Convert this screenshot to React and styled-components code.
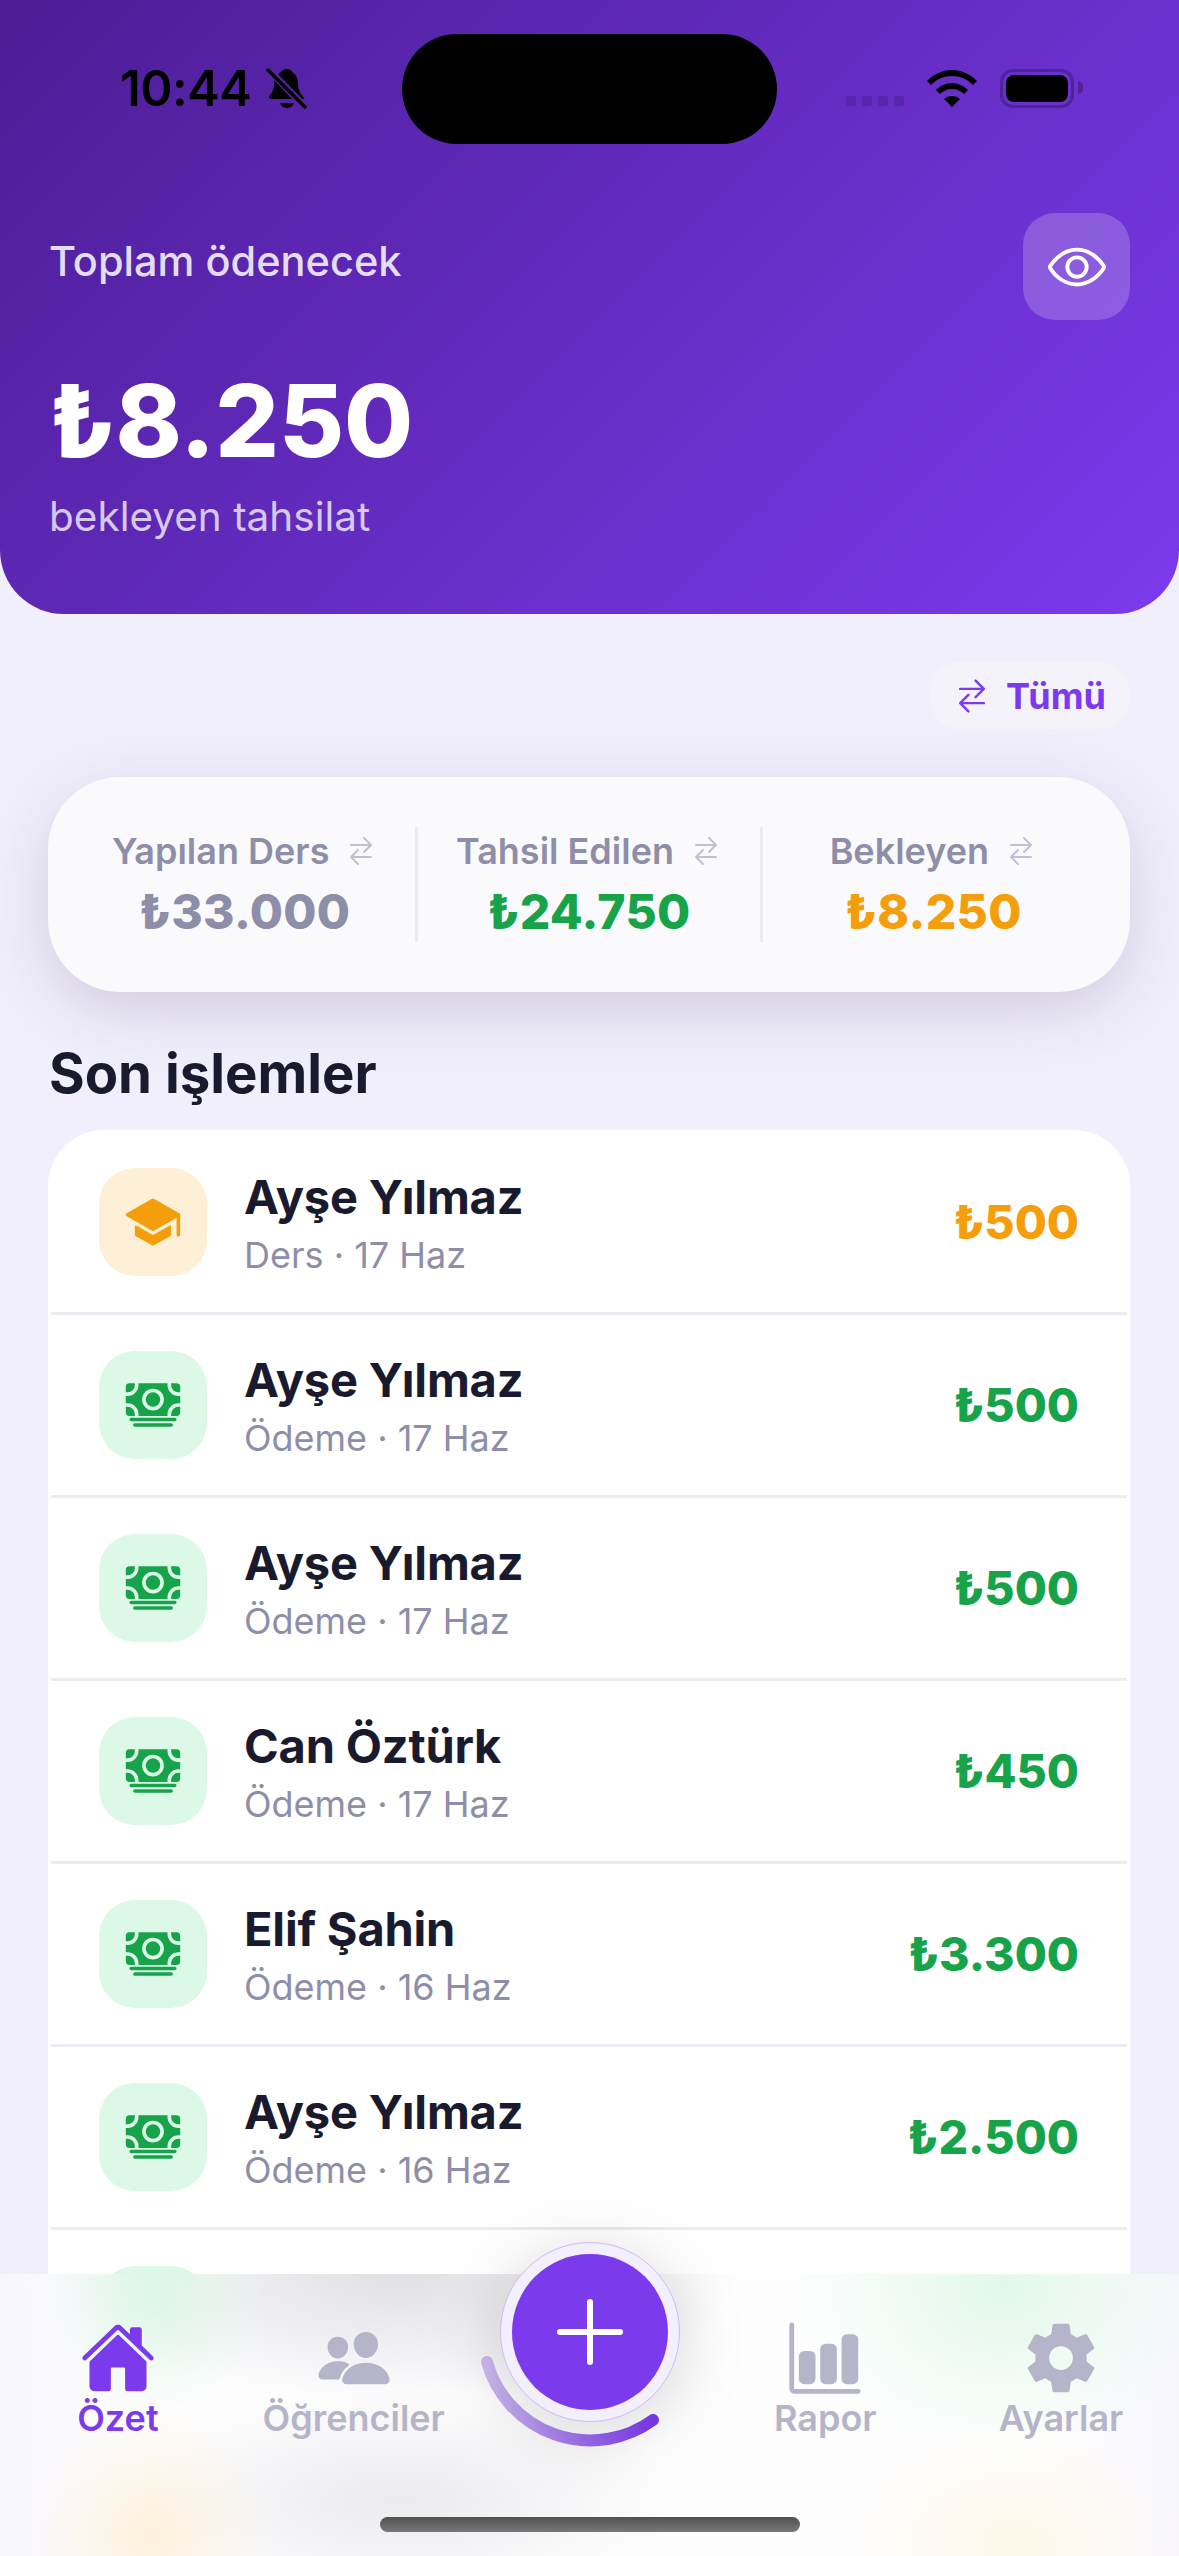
import React from "react";
import styled, { createGlobalStyle } from "styled-components";
import {
  IoBarChart,
  IoCash,
  IoEyeOutline,
  IoHome,
  IoPeople,
  IoSchool,
  IoSettingsSharp,
  IoSwapHorizontal
} from "react-icons/io5";

const GlobalStyle = createGlobalStyle`
  html, body {
    margin: 0;
    padding: 0;
    background: #f2effc;
  }
  body {
    font-family: Inter, "Noto Sans", sans-serif;
  }
`;

const Screen = styled.div`
  position: relative;
  width: 1179px;
  height: 2556px;
  overflow: hidden;
  background: #f2effc;
`;

const Header = styled.header`
  box-sizing: border-box;
  height: 614px;
  padding: 0 49px;
  border-radius: 0 0 64px 64px;
  background: linear-gradient(135deg, #4c1d95, #7c3aed);
  color: #fff;
`;

const StatusBar = styled.div`
  display: flex;
  align-items: center;
  justify-content: space-between;
  height: 176px;
  padding: 0 0 0 71px;
  box-sizing: border-box;
`;

const Clock = styled.div`
  display: flex;
  align-items: center;
  gap: 15px;
  font-size: 49px;
  font-weight: 600;
  letter-spacing: -0.5px;
  color: #000;
`;

const StatusIcons = styled.div`
  display: flex;
  align-items: center;
  gap: 23px;
  margin-right: 56px;
`;

const SignalDots = styled.div`
  display: flex;
  gap: 6px;
  margin-top: 26px;
`;

const SignalDot = styled.span`
  width: 10px;
  height: 10px;
  border-radius: 3px;
  background: #5527a8;
`;

const Battery = styled.div`
  position: relative;
  box-sizing: border-box;
  width: 74px;
  height: 39px;
  padding: 3px;
  border: 3px solid #4c2597;
  border-radius: 13px;
  &::before {
    content: "";
    display: block;
    height: 100%;
    border-radius: 8px;
    background: #000;
  }
  &::after {
    content: "";
    position: absolute;
    right: -12px;
    top: 9px;
    width: 5px;
    height: 13px;
    border-radius: 0 6px 6px 0;
    background: #4c2597;
  }
`;

const Island = styled.div`
  position: absolute;
  top: 34px;
  left: 402px;
  width: 375px;
  height: 110px;
  border-radius: 55px;
  background: #000;
`;

const TotalRow = styled.div`
  display: flex;
  justify-content: space-between;
  align-items: flex-start;
  margin-top: 37px;
`;

const TotalLabel = styled.div`
  margin-top: 24px;
  font-size: 41.5px;
  line-height: 48px;
  font-weight: 500;
  color: rgba(255, 255, 255, 0.85);
`;

const EyeButton = styled.div`
  display: flex;
  align-items: center;
  justify-content: center;
  width: 107px;
  height: 107px;
  border-radius: 32px;
  background: rgba(255, 255, 255, 0.2);
  font-size: 62px;
`;

const TotalAmount = styled.div`
  margin-top: 41px;
  font-size: 100px;
  line-height: 120px;
  font-weight: 800;
`;

const TotalHint = styled.div`
  margin-top: 13px;
  font-size: 40.5px;
  line-height: 46px;
  color: rgba(255, 255, 255, 0.75);
`;

const FilterRow = styled.div`
  display: flex;
  justify-content: flex-end;
  padding: 48px 49px 0;
`;

const FilterPill = styled.div`
  display: flex;
  align-items: center;
  gap: 15px;
  height: 67px;
  padding: 0 24px;
  border-radius: 32px;
  background: #f4f2fb;
  color: #7c3aed;
  font-size: 36px;
  font-weight: 700;
  svg {
    font-size: 38px;
  }
`;

const StatsCard = styled.section`
  display: flex;
  box-sizing: border-box;
  height: 215px;
  margin: 48px 49px 0 48px;
  padding: 50px 26px;
  border-radius: 72px;
  background: #fafafc;
  box-shadow: 0 18px 64px rgba(40, 30, 90, 0.17);
`;

const StatCol = styled.div`
  flex: 1 0 0;
  display: flex;
  flex-direction: column;
  align-items: center;
  & + & {
    border-left: 3px solid #ebeaf1;
  }
`;

const StatLabel = styled.div`
  display: flex;
  align-items: center;
  gap: 16px;
  font-size: 36px;
  line-height: 48px;
  font-weight: 600;
  color: #8e8ea9;
  white-space: nowrap;
  svg {
    font-size: 32px;
    color: #c0c0d0;
  }
`;

const StatValue = styled.div`
  margin-top: 9px;
  font-size: 48px;
  line-height: 56px;
  font-weight: 800;
  letter-spacing: 0.3px;
  color: ${(p) => p.$color};
`;

const SectionTitle = styled.h2`
  margin: 49px 49px 0;
  font-size: 54.5px;
  line-height: 64px;
  font-weight: 700;
  color: #1a1a2e;
`;

const TxList = styled.section`
  margin: 25px 49px 0 48px;
  padding-top: 2px;
  border-radius: 56px 56px 0 0;
  background: #fff;
`;

const TxRow = styled.div`
  display: flex;
  align-items: center;
  box-sizing: border-box;
  height: 183px;
  margin: 0 3px;
  padding: 0 48px;
  border-bottom: 3px solid #ecebf4;
`;

const TxIcon = styled.div`
  flex: none;
  display: flex;
  align-items: center;
  justify-content: center;
  width: 108px;
  height: 108px;
  border-radius: 36px;
  background: ${(p) => p.$bg};
  color: ${(p) => p.$color};
  font-size: 58px;
`;

const TxText = styled.div`
  flex: 1;
  margin-left: 37px;
  padding-top: 1px;
`;

const TxName = styled.div`
  font-size: 47px;
  line-height: 56px;
  font-weight: 650;
  letter-spacing: -0.2px;
  color: #1a1a2e;
`;

const TxSub = styled.div`
  margin-top: 8px;
  font-size: 36px;
  line-height: 44px;
  color: #8e8ea9;
`;

const TxAmount = styled.div`
  font-size: 46.5px;
  font-weight: 800;
  color: ${(p) => p.$color};
`;

// the frosted bar: what would show through the blur is painted as soft glows
const TabBar = styled.nav`
  position: absolute;
  left: 0;
  right: 0;
  bottom: 0;
  display: flex;
  box-sizing: border-box;
  height: 282px;
  padding-top: 46px;
  background:
    radial-gradient(110px 125px at 154px 16px, #ddf7e7, rgba(221, 247, 231, 0)),
    radial-gradient(210px 170px at 1003px 12px, #e2f8ea, rgba(226, 248, 234, 0)),
    radial-gradient(120px 130px at 150px 262px, #fdf1dc, rgba(253, 241, 220, 0)),
    radial-gradient(170px 120px at 1015px 270px, #fdf7e8, rgba(253, 247, 232, 0)),
    radial-gradient(340px 130px at 400px 0px, #e0e0e5, rgba(224, 224, 229, 0)),
    radial-gradient(280px 110px at 400px 226px, #ebebee, rgba(235, 235, 238, 0)),
    linear-gradient(90deg, #f8f6fd, #fdfdfe 12%, #fefefe 88%, #f8f6fd);
`;

const Tab = styled.div`
  flex: 1;
  display: flex;
  flex-direction: column;
  align-items: center;
  height: 120px;
  color: ${(p) => (p.$active ? "#7c3aed" : "#b5b4c8")};
`;

const TabIcon = styled.div`
  display: flex;
  align-items: center;
  justify-content: center;
  height: 76px;
  font-size: 76px;
`;

const TabLabel = styled.div`
  font-size: 36px;
  line-height: 44px;
  font-weight: 600;
`;

const Fab = styled.div`
  position: absolute;
  left: 500px;
  top: 2242px;
  box-sizing: border-box;
  width: 180px;
  height: 180px;
  padding: 11px;
  border: 1px solid #cdbcf6;
  border-radius: 50%;
  background: #f3effd;
  box-shadow: 0 10px 70px rgba(0, 0, 0, 0.16);
`;

const FabInner = styled.div`
  display: flex;
  align-items: center;
  justify-content: center;
  height: 100%;
  border-radius: 50%;
  background: #7c3aed;
`;

const FabArc = styled.svg`
  position: absolute;
  left: 470px;
  top: 2212px;
`;

const HomeIndicator = styled.div`
  position: absolute;
  left: 380px;
  top: 2517px;
  width: 420px;
  height: 15px;
  border-radius: 8px;
  background: linear-gradient(#505050, #787878);
`;

const BellSlash = () => (
  <svg width="42" height="42" viewBox="0 0 42 42">
    <path
      d="M21 2c3 0 5 2 6 4 4 2 5 7 5 11 0 4 1 7 3 10 2 2 3 4 3 5H6c-2 0-3-1-3-2 0-2 3-3 4-7 1-2 1-4 1-6 0-5 2-9 6-11 1-2 4-4 7-4z"
      fill="#000"
    />
    <path d="M14 36c1 3 4 5 7 5s6-2 7-5z" fill="#000" />
    <path d="M3 3l36 37" stroke="#5323a5" strokeWidth="7" />
    <path d="M2 3l37 37" stroke="#000" strokeWidth="3.4" strokeLinecap="round" />
  </svg>
);

const Wifi = () => (
  <svg width="50" height="37" viewBox="0 0 50 37">
    <path
      d="M0 11C7 4 15 0 25 0s18 4 25 11l-4 4C40 9 33 6 25 6S10 9 4 15z"
      fill="#000"
    />
    <path
      d="M9 20c4-4 10-7 16-7s12 3 16 7l-4 4c-3-3-7-5-12-5s-9 2-12 5z"
      fill="#000"
    />
    <path d="M17 29c2-2 5-3 8-3s6 1 8 3l-8 8z" fill="#000" />
  </svg>
);

const stats = [
  { label: "Yapılan Ders", value: "₺33.000", color: "#8e8ea9" },
  { label: "Tahsil Edilen", value: "₺24.750", color: "#16a34a" },
  { label: "Bekleyen", value: "₺8.250", color: "#f59e0b" }
];

const txs = [
  { name: "Ayşe Yılmaz", sub: "Ders · 17 Haz", amount: "₺500", lesson: true },
  { name: "Ayşe Yılmaz", sub: "Ödeme · 17 Haz", amount: "₺500" },
  { name: "Ayşe Yılmaz", sub: "Ödeme · 17 Haz", amount: "₺500" },
  { name: "Can Öztürk", sub: "Ödeme · 17 Haz", amount: "₺450" },
  { name: "Elif Şahin", sub: "Ödeme · 16 Haz", amount: "₺3.300" },
  { name: "Ayşe Yılmaz", sub: "Ödeme · 16 Haz", amount: "₺2.500" },
  { name: "Ayşe Yılmaz", sub: "Ödeme · 16 Haz", amount: "₺2.500" }
];

const tabs = [
  { label: "Özet", Icon: IoHome, active: true },
  { label: "Öğrenciler", Icon: IoPeople },
  null,
  { label: "Rapor", Icon: IoBarChart },
  { label: "Ayarlar", Icon: IoSettingsSharp }
];

export default function App() {
  return (
    <Screen>
      <GlobalStyle />
      <Header>
        <StatusBar>
          <Clock>
            10:44
            <BellSlash />
          </Clock>
          <StatusIcons>
            <SignalDots>
              <SignalDot />
              <SignalDot />
              <SignalDot />
              <SignalDot />
            </SignalDots>
            <Wifi />
            <Battery />
          </StatusIcons>
        </StatusBar>
        <TotalRow>
          <TotalLabel>Toplam ödenecek</TotalLabel>
          <EyeButton>
            <IoEyeOutline />
          </EyeButton>
        </TotalRow>
        <TotalAmount>₺8.250</TotalAmount>
        <TotalHint>bekleyen tahsilat</TotalHint>
      </Header>
      <Island />

      <FilterRow>
        <FilterPill>
          <IoSwapHorizontal />
          Tümü
        </FilterPill>
      </FilterRow>

      <StatsCard>
        {stats.map((s) => (
          <StatCol key={s.label}>
            <StatLabel>
              {s.label}
              <IoSwapHorizontal />
            </StatLabel>
            <StatValue $color={s.color}>{s.value}</StatValue>
          </StatCol>
        ))}
      </StatsCard>

      <SectionTitle>Son işlemler</SectionTitle>
      <TxList>
        {txs.map((t, i) => {
          const color = t.lesson ? "#f59e0b" : "#16a34a";
          return (
            <TxRow key={i}>
              <TxIcon $bg={t.lesson ? "#fef0d6" : "#dcf9e8"} $color={color}>
                {t.lesson ? <IoSchool /> : <IoCash />}
              </TxIcon>
              <TxText>
                <TxName>{t.name}</TxName>
                <TxSub>{t.sub}</TxSub>
              </TxText>
              <TxAmount $color={color}>{t.amount}</TxAmount>
            </TxRow>
          );
        })}
      </TxList>

      <TabBar>
        {tabs.map((t, i) =>
          t ? (
            <Tab key={t.label} $active={t.active}>
              <TabIcon>
                <t.Icon />
              </TabIcon>
              <TabLabel>{t.label}</TabLabel>
            </Tab>
          ) : (
            <Tab key={i} />
          )
        )}
      </TabBar>

      <FabArc width="240" height="240" viewBox="0 0 240 240">
        <defs>
          <linearGradient id="arcFade" x1="0" y1="0" x2="1" y2="0">
            <stop offset="0" stopColor="#cbb8ee" />
            <stop offset="1" stopColor="#7c3aed" />
          </linearGradient>
        </defs>
        <path
          d="M17 150A107 107 0 0 0 183 208"
          fill="none"
          stroke="url(#arcFade)"
          strokeWidth="12"
          strokeLinecap="round"
        />
      </FabArc>
      <Fab>
        <FabInner>
          <svg width="66" height="66" viewBox="0 0 66 66">
            <path
              d="M33 3v60M3 33h60"
              stroke="#fff"
              strokeWidth="6"
              strokeLinecap="round"
            />
          </svg>
        </FabInner>
      </Fab>
      <HomeIndicator />
    </Screen>
  );
}
